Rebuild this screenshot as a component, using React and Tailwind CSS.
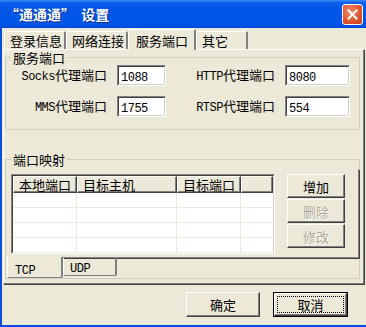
import React from "react";

const Lat = ({ children }) => (
  <span className="font-['Liberation_Mono',monospace] text-[12px] tracking-[-0.5px]">
    {children}
  </span>
);

const Sunken = ({ className, children }) => (
  <div className={`border border-t-[#808080] border-l-[#808080] border-r-white border-b-white ${className}`}>
    <div className="h-full border border-t-[#404040] border-l-[#404040] border-r-[#d4d0c8] border-b-[#d4d0c8] bg-white">
      {children}
    </div>
  </div>
);

const Port = ({ label, value, labelW, inputW, gap }) => (
  <>
    <div className={`${labelW} ${gap} text-right leading-[21px]`}>{label}</div>
    <Sunken className={`${inputW} h-[21px] ml-[10px]`}>
      <div className="pl-[2px] leading-[17px]">
        <Lat>{value}</Lat>
      </div>
    </Sunken>
  </>
);

const Btn = ({ children, disabled, className }) => (
  <div
    className={`h-[24px] w-[58px] flex items-center justify-center bg-[#ece9d8] border border-t-white border-l-white border-r-[#404040] border-b-[#404040] shadow-[inset_-1px_-1px_0_#808080] ${
      disabled ? "text-[#aca899] [text-shadow:1px_1px_0_#fff]" : ""
    } ${className || ""}`}
  >
    {children}
  </div>
);

const Group = ({ title, className, children }) => (
  <fieldset className={`ml-[1px] mr-[3px] border border-[#d0d0bf] px-0 ${className || ""}`}>
    <legend className="ml-[5px] px-[2px] leading-[15px]">{title}</legend>
    {children}
  </fieldset>
);

const topTabs = [
  { t: "登录信息", w: "w-[62px]" },
  { t: "网络连接", w: "w-[62px]" },
  { t: "服务端口", w: "w-[68px]", on: true },
  { t: "其它", w: "w-[52px]" },
];

const cols = ["w-[64px]", "w-[100px]", "w-[64px]", "flex-1"];
const heads = ["本地端口", "目标主机", "目标端口", ""];

export default function App() {
  return (
    <div className="w-[366px] h-[327px] flex flex-col bg-[#0a4fdc] font-['Noto_Sans_CJK_SC',sans-serif] text-[13px] leading-[15px] text-black overflow-hidden">
      {/* title bar */}
      <div className="h-[28px] shrink-0 flex items-center pl-[5px] bg-[linear-gradient(180deg,#3d8ef8,#0a5ee9_10%,#0055e6_40%,#0057ea_85%,#0048d8)]">
        <span className="text-white font-bold text-[14px] [text-shadow:1px_1px_0_#0a2a8a]">
          “通通通”&nbsp; 设置
        </span>
        <div className="ml-auto mr-[3px] w-[21px] h-[21px] rounded-[3px] border border-white bg-[radial-gradient(circle_at_40%_35%,#f08a66,#e0542f_60%,#c4401f)] flex items-center justify-center">
          <svg width="11" height="11" viewBox="0 0 11 11">
            <path d="M1.5 1.5 L9.5 9.5 M9.5 1.5 L1.5 9.5" stroke="#fff" strokeWidth="2" strokeLinecap="square" />
          </svg>
        </div>
      </div>

      {/* body */}
      <div className="flex-1 ml-[2px] mb-[2px] bg-[#ece9d8] pt-[1px] flex flex-col">
        <div className="h-[20px] flex items-end pl-[2px] relative z-10">
          {topTabs.map((tb) => (
            <div
              key={tb.t}
              className={`${tb.w} pl-[5px] rounded-t-[2px] bg-[#ece9d8] border-l border-t border-white border-r-2 border-r-[#808080] ${
                tb.on ? "h-[21px] -mb-[1px] pt-[3px] pl-[7px]" : "h-[18px] pt-[1px]"
              }`}
            >
              {tb.t}
            </div>
          ))}
        </div>

        {/* tab page */}
        <div className="ml-[1px] mr-[2px] h-[235px] border border-t-white border-l-white border-r-[#808080] border-b-[#808080] shadow-[1px_1px_0_#404040]">
          <Group title="服务端口" className="pb-[12px]">
            <div className="flex items-center h-[21px]">
              <Port label={<><Lat>Socks</Lat>代理端口</>} value="1088" labelW="w-[101px]" inputW="w-[49px]" />
              <Port label={<><Lat>HTTP</Lat>代理端口</>} value="8080" labelW="w-[109px]" inputW="w-[65px]" />
            </div>
            <div className="flex items-center h-[21px] mt-[10px]">
              <Port label={<><Lat>MMS</Lat>代理端口</>} value="1755" labelW="w-[101px]" inputW="w-[49px]" />
              <Port label={<><Lat>RTSP</Lat>代理端口</>} value="554" labelW="w-[109px]" inputW="w-[65px]" />
            </div>
          </Group>

          <Group title="端口映射" className="mt-[22px]">
            <div className="mt-[2px] ml-[2px] border-r border-b border-[#808080] shadow-[1px_1px_0_#404040] pl-[3px] pt-[5px] pb-[3px] flex">
              <Sunken className="w-[264px] h-[80px]">
                <div className="flex h-[17px] bg-[#ece9d8]">
                  {heads.map((h, i) => (
                    <div
                      key={i}
                      className={`${cols[i]} h-full pl-[5px] leading-[15px] border border-t-white border-l-white border-r-[#404040] border-b-[#404040] shadow-[inset_-1px_-1px_0_#808080]`}
                    >
                      {h}
                    </div>
                  ))}
                </div>
                {[0, 1, 2, 3].map((r) => (
                  <div key={r} className="flex h-[15px] border-b border-[#ebe9dc]">
                    {cols.map((c, i) => (
                      <div key={i} className={`${c} h-full ${i < 3 ? "border-r border-[#ebe9dc]" : ""}`} />
                    ))}
                  </div>
                ))}
              </Sunken>
              <div className="ml-[12px] flex flex-col gap-[1px]">
                <Btn>增加</Btn>
                <Btn disabled>删除</Btn>
                <Btn disabled>修改</Btn>
              </div>
            </div>
            <div className="flex items-start ml-[1px] -mt-[1px] relative">
              <div className="w-[56px] h-[21px] bg-[#ece9d8] border-l border-white border-r-2 border-r-[#808080] border-b border-b-[#808080] rounded-b-[2px] pl-[7px] pt-[4px]">
                <Lat>TCP</Lat>
              </div>
              <div className="w-[54px] h-[18px] mt-[1px] border-l border-white border-r-2 border-r-[#808080] border-b border-b-[#808080] rounded-b-[2px] pl-[6px] pt-[1px]">
                <Lat>UDP</Lat>
              </div>
            </div>
          </Group>
        </div>

        {/* dialog buttons */}
        <div className="flex justify-end gap-[13px] mt-[8px] pr-[18px]">
          <div className="w-[74px] h-[25px] flex items-center justify-center border border-t-white border-l-white border-r-[#404040] border-b-[#404040] shadow-[inset_-1px_-1px_0_#808080]">
            确定
          </div>
          <div className="w-[75px] h-[25px] flex border border-black">
            <div className="flex-1 flex border border-t-white border-l-white border-r-[#404040] border-b-[#404040] shadow-[inset_-1px_-1px_0_#808080]">
              <div className="flex-1 m-[2px] border border-dotted border-black flex items-center justify-center">
                取消
              </div>
            </div>
          </div>
        </div>
      </div>
    </div>
  );
}
